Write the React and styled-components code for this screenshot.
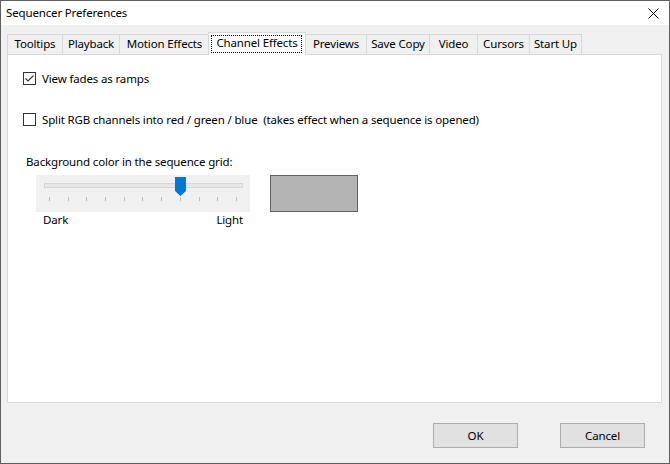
import React from "react";
import styled, { createGlobalStyle } from "styled-components";

const Global = createGlobalStyle`
  html, body { margin: 0; padding: 0; background: #f0f0f0; }
  body { font-family: "Noto Sans", "Open Sans", sans-serif; font-size: 11.5px; letter-spacing: -0.15px; color: #000; }
  * { box-sizing: border-box; }
`;

const Window = styled.div`
  width: 670px;
  height: 464px;
  border: 1px solid #5f5f5f;
  background: #f0f0f0;
  display: flex;
  flex-direction: column;
  line-height: 16px;
`;

const TitleBar = styled.div`
  height: 24px;
  background: #fff;
  display: flex;
  align-items: center;
  justify-content: space-between;
  padding: 0 10px 0 5px;
`;

const Title = styled.span`
  font-size: 11.5px;
`;

const Body = styled.div`
  flex: 1;
  display: flex;
  flex-direction: column;
  padding: 7px 7px 0 6px;
`;

const TabStrip = styled.div`
  display: flex;
  align-items: flex-end;
  height: 22px;
  position: relative;
  z-index: 1;
`;

const Tab = styled.div`
  position: relative;
  width: ${(p) => p.$w}px;
  height: ${(p) => (p.$active ? 23 : 20)}px;
  margin-left: ${(p) => (p.$active ? -2 : 0)}px;
  margin-bottom: ${(p) => (p.$active ? -1 : 0)}px;
  background: ${(p) => (p.$active ? "#fff" : "#f0f0f0")};
  border-top: 1px solid #d9d9d9;
  border-right: 1px solid #d9d9d9;
  border-left: ${(p) => (p.$first || p.$active ? "1px solid #d9d9d9" : "none")};
  display: flex;
  justify-content: center;
  padding-top: ${(p) => (p.$active ? 2 : 1)}px;
  white-space: nowrap;
  z-index: ${(p) => (p.$active ? 2 : 1)};
`;

const FocusRect = styled.span`
  position: absolute;
  left: 2px;
  right: 3px;
  top: 2px;
  bottom: 2px;
  border: 1px dotted #000;
`;

const Panel = styled.div`
  width: 655px;
  height: 349px;
  background: #fff;
  border: 1px solid #d9d9d9;
  padding: 15px 0 0 15px;
  display: flex;
  flex-direction: column;
`;

const CheckRow = styled.label`
  display: flex;
  align-items: center;
  gap: 6px;
  height: 17px;
  margin-bottom: ${(p) => p.$mb || 0}px;
`;

const Box = styled.span`
  width: 13px;
  height: 13px;
  border: 1px solid #333;
  background: #fff;
  display: flex;
  align-items: center;
  justify-content: center;
  flex: none;
`;

const GroupLabel = styled.div`
  margin: 26px 0 5px 3px;
`;

const SliderRow = styled.div`
  display: flex;
  gap: 20px;
  margin-left: 13px;
`;

const SliderCol = styled.div`
  width: 214px;
  display: flex;
  flex-direction: column;
`;

const SliderBox = styled.div`
  position: relative;
  height: 37px;
  background: #f0f0f0;
  padding: 8px 7px 0 8px;
`;

const Track = styled.div`
  height: 5px;
  background: #e7e7e7;
  border: 1px solid #d6d6d6;
`;

const Ticks = styled.div`
  display: flex;
  justify-content: space-between;
  margin: 9px 6px 0 5px;
`;

const Tick = styled.span`
  width: 1px;
  height: 4px;
  background: #bcbcbc;
`;

const Thumb = styled.svg`
  position: absolute;
  top: 2px;
`;

const EndLabels = styled.div`
  display: flex;
  justify-content: space-between;
  padding: 0 7px 0 7px;
`;

const Swatch = styled.div`
  width: 88px;
  height: 37px;
  background: #b4b4b4;
  border: 1px solid #646464;
`;

const Footer = styled.div`
  display: flex;
  justify-content: flex-end;
  gap: 42px;
  padding: 20px 17px 0 0;
`;

const Button = styled.button`
  width: 85px;
  height: 25px;
  background: #e1e1e1;
  border: 1px solid #adadad;
  font-family: inherit;
  font-size: 11.5px;
  letter-spacing: -0.15px;
  color: #000;
  padding: 0;
`;

const tabs = [
  { label: "Tooltips", w: 56 },
  { label: "Playback", w: 57 },
  { label: "Motion Effects", w: 90 },
  { label: "Channel Effects", w: 98, active: true },
  { label: "Previews", w: 61 },
  { label: "Save Copy", w: 63 },
  { label: "Video", w: 48 },
  { label: "Cursors", w: 52 },
  { label: "Start Up", w: 52 },
];

function Check({ checked }) {
  return (
    <Box>
      {checked && (
        <svg width="11" height="11" viewBox="0 0 11 11">
          <path d="M1.5 5.5 L4 8 L9.5 2.5" fill="none" stroke="#333" strokeWidth="1.1" />
        </svg>
      )}
    </Box>
  );
}

export default function App() {
  const value = 7;
  const thumbLeft = 13 + value * 18.7 - 5;
  return (
    <>
      <Global />
      <Window>
        <TitleBar>
          <Title>Sequencer Preferences</Title>
          <svg width="11" height="11" viewBox="0 0 11 11">
            <path d="M0.5 0.5 L10.5 10.5 M10.5 0.5 L0.5 10.5" stroke="#000" strokeWidth="1" />
          </svg>
        </TitleBar>
        <Body>
          <TabStrip>
            {tabs.map((t, i) => (
              <Tab key={t.label} $w={t.w} $active={t.active} $first={i === 0}>
                {t.label}
                {t.active && <FocusRect />}
              </Tab>
            ))}
          </TabStrip>
          <Panel>
            <CheckRow $mb={24}>
              <Check checked />
              <span>View fades as ramps</span>
            </CheckRow>
            <CheckRow>
              <Check />
              <span>Split RGB channels into red / green / blue&nbsp; (takes effect when a sequence is opened)</span>
            </CheckRow>
            <GroupLabel>Background color in the sequence grid:</GroupLabel>
            <SliderRow>
              <SliderCol>
                <SliderBox>
                  <Track />
                  <Ticks>
                    {Array.from({ length: 11 }).map((_, i) => (
                      <Tick key={i} />
                    ))}
                  </Ticks>
                  <Thumb width="11" height="19" viewBox="0 0 11 19" style={{ left: thumbLeft }}>
                    <path d="M0 0 H11 V14 L5.5 19 L0 14 Z" fill="#0078d7" />
                  </Thumb>
                </SliderBox>
                <EndLabels>
                  <span>Dark</span>
                  <span>Light</span>
                </EndLabels>
              </SliderCol>
              <Swatch />
            </SliderRow>
          </Panel>
          <Footer>
            <Button>OK</Button>
            <Button>Cancel</Button>
          </Footer>
        </Body>
      </Window>
    </>
  );
}
